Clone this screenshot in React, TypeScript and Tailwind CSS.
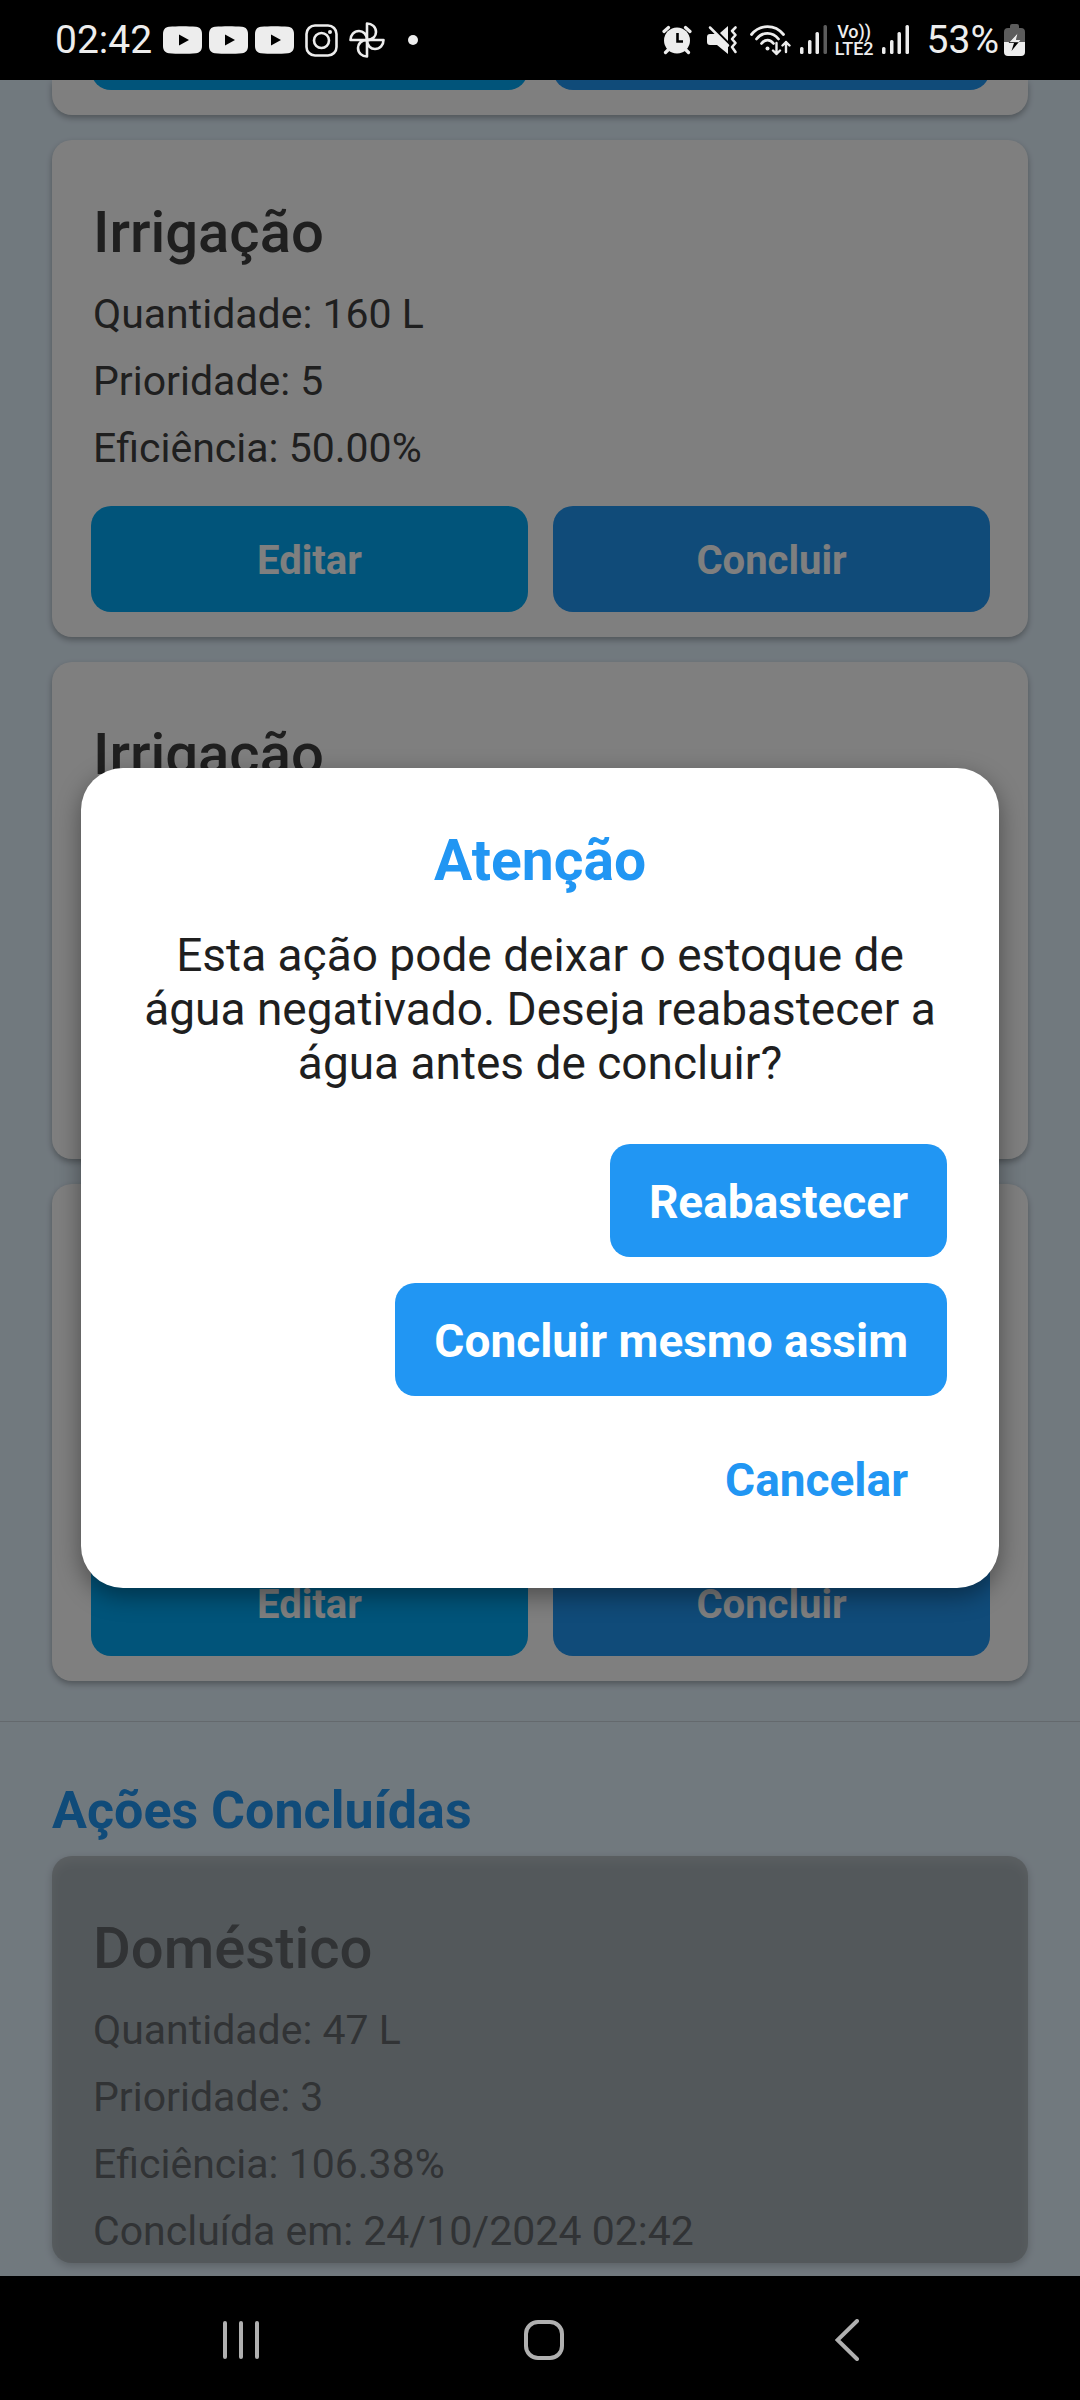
import type { ReactNode } from "react";

const INK = "#ededed";

function YoutubeIcon() {
  return (
    <svg width="39" height="28" viewBox="0 0 39 28" aria-hidden="true">
      <path d="M6 .8C14 0 25 0 33 .8c4 .3 6 3.200 6 7.200v12c0 4-2 6.900-6 7.200-8 .8-19 .8-27 0-4-.3-6-3.200-6-7.200V8c0-4 2-6.900 6-7.200Z" fill={INK} />
      <path d="M16 8.500v11l10-5.500Z" fill="#000" />
    </svg>
  );
}

function InstagramIcon() {
  return (
    <svg width="33" height="33" viewBox="0 0 33 33" fill="none" stroke={INK} strokeWidth="2.600" aria-hidden="true">
      <rect x="1.500" y="1.500" width="30" height="30" rx="8.500" />
      <circle cx="16.500" cy="16.500" r="7.500" />
      <circle cx="25" cy="8" r="2" fill={INK} stroke="none" />
    </svg>
  );
}

function PhotosIcon() {
  const blade = "M18 18V1.500c5 0 9 3.500 9 8.500 0 4-3 8-9 8Z";
  return (
    <svg width="36" height="36" viewBox="0 0 36 36" fill="none" stroke={INK} strokeWidth="2.600" strokeLinejoin="round" aria-hidden="true">
      <path d={blade} />
      <path d={blade} transform="rotate(90 18 18)" />
      <path d={blade} transform="rotate(180 18 18)" />
      <path d={blade} transform="rotate(270 18 18)" />
    </svg>
  );
}

function AlarmIcon() {
  return (
    <svg width="30" height="30" viewBox="0 0 30 30" aria-hidden="true">
      <g stroke={INK} strokeWidth="3.200" strokeLinecap="round" fill="none">
        <path d="M2 6.500 6.500 2.500M28 6.500 23.500 2.500M6 25 3.500 27.500M24 25l2.500 2.500" />
      </g>
      <circle cx="15" cy="15.500" r="13" fill={INK} />
      <path d="M15.500 8v8.500H21" stroke="#000" strokeWidth="2.600" fill="none" />
    </svg>
  );
}

function MuteVibrateIcon() {
  return (
    <svg width="31" height="30" viewBox="0 0 31 30" aria-hidden="true">
      <path d="M0 12c0-2 1-3 3-3h6L21 20.500V29L10 20H3c-2 0-3-1-3-3Z" fill={INK} />
      <path d="M13 8 21 1v15Z" fill={INK} />
      <path d="M3 2.500 21 20.500" stroke={INK} strokeWidth="2.500" strokeLinecap="round" />
      <path d="M28.500 2.500 25 6l3.500 4L25 14l3.500 4-3.500 4 3.500 5" stroke={INK} strokeWidth="2.600" fill="none" strokeLinecap="round" strokeLinejoin="round" />
    </svg>
  );
}

function WifiIcon() {
  return (
    <svg width="41" height="31" viewBox="0 0 41 31" fill="none" stroke={INK} strokeWidth="2.800" strokeLinecap="round" strokeLinejoin="round" aria-hidden="true">
      <path d="M1.500 9.500C10-1 25-1 33.500 9.500M6.500 14C12.500 6.500 22.500 6.500 28.500 14M11.500 18.500c3.500-4.500 8.500-4.500 12 0" />
      <circle cx="17.500" cy="23.500" r="2" fill={INK} stroke="none" />
      <path d="M26.500 18v11M23 25.500l3.500 3.500 3.500-3.500M36 27V17M32.500 20.500 36 17l3.500 3.500" strokeWidth="2.400" />
    </svg>
  );
}

function SignalIcon({ full }: { full: boolean }) {
  return (
    <svg width="27" height="30" viewBox="0 0 27 30" aria-hidden="true">
      <rect x="0" y="22" width="3.500" height="7" rx="1.500" fill={INK} />
      <rect x="8" y="15" width="3.500" height="14" rx="1.500" fill={INK} />
      <rect x="15.500" y="7" width="3.500" height="22" rx="1.500" fill={INK} />
      <rect x="23.500" y="0" width="3.500" height="29" rx="1.500" fill={full ? INK : "#5c5c5c"} />
    </svg>
  );
}

function BatteryIcon() {
  return (
    <svg width="21" height="32" viewBox="0 0 21 32" aria-hidden="true">
      <path d="M6 4V2q0-2 2-2h5q2 0 2 2v2h2q4 0 4 4v10H0V8q0-4 4-4Z" fill="#5c5c5c" />
      <path d="M0 18h21v10q0 4-4 4H4q-4 0-4-4Z" fill={INK} />
      <path d="M13.500 9.500 4.500 19H10l-2.500 8L16.500 16H12Z" fill="#000" />
      <path d="M13.500 9.500 5.400 18.200h9.300L16.500 16H12Z" fill={INK} />
    </svg>
  );
}

function StatusBar() {
  return (
    <header className="flex h-20 items-center justify-between bg-black px-[55px] text-[39px] text-[#ededed]">
      <div className="flex items-center gap-[7px]">
        <span className="mr-1">02:42</span>
        <YoutubeIcon />
        <YoutubeIcon />
        <YoutubeIcon />
        <span className="ml-1"><InstagramIcon /></span>
        <span className="ml-1"><PhotosIcon /></span>
        <span className="ml-4 size-[10px] rounded-full bg-[#ededed]" />
      </div>
      <div className="flex items-center">
        <AlarmIcon />
        <span className="ml-[15px]"><MuteVibrateIcon /></span>
        <span className="ml-3"><WifiIcon /></span>
        <span className="ml-[9px]"><SignalIcon full={false} /></span>
        <span className="ml-2 flex flex-col items-center text-[18px] leading-[17px] font-medium">
          <span>Vo))</span>
          <span>LTE2</span>
        </span>
        <span className="ml-2"><SignalIcon full /></span>
        <span className="ml-[18px]">53%</span>
        <span className="ml-[5px]"><BatteryIcon /></span>
      </div>
    </header>
  );
}

type Action = {
  title: string;
  lines: string[];
};

const irrigation: Action = {
  title: "Irrigação",
  lines: ["Quantidade: 160 L", "Prioridade: 5", "Eficiência: 50.00%"],
};

const pending: Action[] = [irrigation, irrigation, irrigation];

const completed: Action = {
  title: "Doméstico",
  lines: ["Quantidade: 47 L", "Prioridade: 3", "Eficiência: 106.38%", "Concluída em: 24/10/2024 02:42"],
};

function ActionText({ action }: { action: Action }) {
  return (
    <>
      <h3 className="text-[58px] leading-[68px] font-medium">{action.title}</h3>
      <div className="mt-[25px] flex flex-col gap-5 text-[41px] leading-[47px]">
        {action.lines.map((line) => (
          <p key={line}>{line}</p>
        ))}
      </div>
    </>
  );
}

function PendingCard({ action }: { action: Action }) {
  return (
    <article className="rounded-[20px] bg-white pt-[58px] pr-[38px] pb-[25px] pl-[39px] text-[#3e3e3e] shadow-[0_3px_6px_rgba(0,0,0,0.3)]">
      <div className="px-[2px]">
        <ActionText action={action} />
      </div>
      <div className="mt-[34px] flex gap-[25px] text-[40px] font-bold text-white">
        <button type="button" className="h-[106px] flex-1 rounded-[20px] bg-[#03a9f4] pt-1">Editar</button>
        <button type="button" className="h-[106px] flex-1 rounded-[20px] bg-[#2196f3] pt-1">Concluir</button>
      </div>
    </article>
  );
}

/* Lower edge of the card that is scrolled under the status bar. */
function ScrolledCard() {
  return (
    <article className="rounded-b-[20px] bg-white pr-[38px] pb-[25px] pl-[39px] shadow-[0_3px_6px_rgba(0,0,0,0.3)]">
      <div className="flex h-[10px] items-end gap-[25px] overflow-hidden">
        <button type="button" aria-label="Editar" className="h-[106px] flex-1 rounded-[20px] bg-[#03a9f4]" />
        <button type="button" aria-label="Concluir" className="h-[106px] flex-1 rounded-[20px] bg-[#2196f3]" />
      </div>
    </article>
  );
}

function DialogButton({ children, filled = true }: { children: ReactNode; filled?: boolean }) {
  return (
    <button
      type="button"
      className={
        filled
          ? "h-[113px] rounded-[20px] bg-[#2196f3] px-[39px] pt-1 text-white"
          : "h-[113px] rounded-[20px] px-[39px] pt-1 text-[#2196f3]"
      }
    >
      {children}
    </button>
  );
}

function WarningDialog() {
  return (
    <div className="absolute inset-0 flex items-center bg-black/50 px-[81px]">
      <div
        role="dialog"
        aria-labelledby="warning-title"
        className="w-full rounded-[42px] bg-white px-[52px] pt-[59px] pb-[53px] shadow-[0_8px_24px_rgba(0,0,0,0.4)]"
      >
        <h2 id="warning-title" className="text-center text-[57px] leading-[68px] font-bold text-[#2196f3]">
          Atenção
        </h2>
        <p className="mt-[33px] text-center text-[46px] leading-[54px] text-[#1f1f1f]">
          Esta ação pode deixar o estoque de água negativado. Deseja reabastecer a água antes de concluir?
        </p>
        <div className="mt-[54px] flex flex-col items-end gap-[26px] text-[46px] font-bold">
          <DialogButton>Reabastecer</DialogButton>
          <DialogButton>Concluir mesmo assim</DialogButton>
          <DialogButton filled={false}>Cancelar</DialogButton>
        </div>
      </div>
    </div>
  );
}

function NavigationBar() {
  return (
    <nav className="flex h-[124px] items-center bg-black pt-[3px] pr-[82px] pl-[89px]">
      <button type="button" aria-label="Recentes" className="flex flex-1 justify-center">
        <svg width="38" height="40" viewBox="0 0 38 40" stroke="#b0b0b0" strokeWidth="4" strokeLinecap="round">
          <path d="M3 3v34M19 3v34M35 3v34" />
        </svg>
      </button>
      <button type="button" aria-label="Início" className="flex flex-1 justify-center">
        <svg width="40" height="40" viewBox="0 0 40 40" fill="none" stroke="#b0b0b0" strokeWidth="4">
          <rect x="2" y="2" width="36" height="36" rx="12" />
        </svg>
      </button>
      <button type="button" aria-label="Voltar" className="flex flex-1 justify-center">
        <svg width="24" height="42" viewBox="0 0 24 42" fill="none" stroke="#b0b0b0" strokeWidth="4" strokeLinecap="round">
          <path d="M22 2 2.500 21 22 40" />
        </svg>
      </button>
    </nav>
  );
}

export default function App() {
  return (
    <div className="flex min-h-screen flex-col font-['Roboto',sans-serif]">
      <StatusBar />
      <main className="relative flex-1 overflow-hidden bg-[#e3f2fd]">
        <section className="flex flex-col gap-[25px] px-[52px] pb-10">
          <ScrolledCard />
          {pending.map((action, index) => (
            <PendingCard key={index} action={action} />
          ))}
        </section>
        <hr className="border-[#c8d2da]" />
        <section className="px-[52px] pt-[58px] pb-[13px]">
          <h2 className="text-[52px] leading-[62px] font-bold text-[#2196f3]">Ações Concluídas</h2>
          <article className="mt-[14px] rounded-[20px] bg-[#a7b1b7] px-[41px] pt-[58px] pb-2 text-[#62666a] shadow-[inset_0_6px_10px_rgba(255,255,255,0.18),0_3px_8px_rgba(0,0,0,0.2)]">
            <ActionText action={completed} />
          </article>
        </section>
        <WarningDialog />
      </main>
      <NavigationBar />
    </div>
  );
}
